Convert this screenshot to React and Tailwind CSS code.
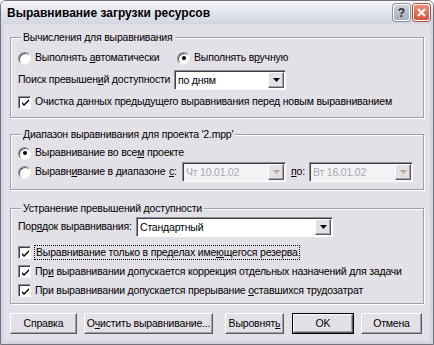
import React from 'react';

const font = "font-['Liberation_Sans','Noto_Sans',sans-serif]";
const txt = 'text-[10.5px] tracking-[-0.2px] whitespace-nowrap';

function Radio({ checked }) {
  return (
    <span className="relative inline-block w-[13px] h-[13px] shrink-0 rounded-full bg-white border border-t-[#8d8b94] border-l-[#8d8b94] border-b-[#f4f3f6] border-r-[#f4f3f6] shadow-[inset_1px_1px_0_#55545a]">
      {checked && (
        <span className="absolute left-[3.5px] top-[3.5px] w-[4px] h-[4px] rounded-full bg-black" />
      )}
    </span>
  );
}

function Check() {
  return (
    <span className="inline-flex items-center justify-center w-[13px] h-[13px] shrink-0 bg-white border border-t-[#8d8b94] border-l-[#8d8b94] border-b-white border-r-white shadow-[inset_1px_1px_0_#3e3d44]">
      <svg width="9" height="9" viewBox="0 0 9 9" className="mt-[1px] ml-[1px]">
        <path d="M1 4 L3 6 L8 1 L8 3 L3 8 L1 6 Z" fill="#000" />
      </svg>
    </span>
  );
}

function Arrow({ disabled }) {
  return (
    <span className="flex items-center justify-center w-[16px] h-full bg-[#e3e0e7] border border-t-white border-l-white border-b-[#5b5a62] border-r-[#5b5a62] shadow-[inset_-1px_-1px_0_#a3a1aa]">
      <svg width="7" height="4" viewBox="0 0 7 4">
        <path d="M0 0 H7 L3.5 4 Z" fill={disabled ? '#b9a68d' : '#000'} />
      </svg>
    </span>
  );
}

function Combo({ value, width, disabled }) {
  return (
    <div
      className={`flex items-stretch h-[20px] shrink-0 ${width} border border-t-[#8d8b94] border-l-[#8d8b94] border-b-white border-r-white shadow-[inset_1px_1px_0_#3e3d44] ${disabled ? 'bg-[#f3f2f5]' : 'bg-white'}`}
    >
      <span className={`flex-1 pl-[3px] pt-[1px] flex items-center ${txt} ${disabled ? 'text-[#a9a8ae]' : 'text-black'}`}>
        {value}
      </span>
      <span className="p-[1px] pl-0">
        <Arrow disabled={disabled} />
      </span>
    </div>
  );
}

function Group({ title, children, className }) {
  return (
    <fieldset className={`border border-[#a29fa9] shadow-[inset_1px_1px_0_#fff,1px_1px_0_#fff] pl-[7px] pr-[7px] ${className}`}>
      <legend className={`ml-[3px] px-[2px] leading-[13px] bg-[#e3e0e7] ${txt}`}>{title}</legend>
      {children}
    </fieldset>
  );
}

function Btn({ children, width, def }) {
  return (
    <button className={`${width} h-[21px] shrink-0 bg-[#e3e0e7] ${txt} ${def ? 'border border-black' : ''}`}>
      <span className="flex items-center justify-center w-full h-full border border-t-white border-l-white border-b-[#5b5a62] border-r-[#5b5a62] shadow-[inset_-1px_-1px_0_#a3a1aa]">
        <span>{children}</span>
      </span>
    </button>
  );
}

export default function App() {
  return (
    <div className={`w-[434px] h-[345px] flex flex-col bg-[#e3e0e7] border border-[#72737f] rounded-t-[6px] overflow-hidden text-black ${font}`}>
      {/* заголовок */}
      <div className="h-[23px] shrink-0 flex items-center pl-[6px] pr-[3px] bg-gradient-to-b from-[#f6f7fa] via-[#e2e4ec] to-[#d3d6e1]">
        <span className="flex-1 text-[12px] font-bold whitespace-nowrap">Выравнивание загрузки ресурсов</span>
        <span className="w-[17px] h-[17px] mr-[1px] flex items-center justify-center rounded-[3px] border border-white bg-gradient-to-b from-[#cdd1dc] to-[#a9aebd] shadow-[0_0_0_1px_#8d92a2] text-[12px] font-bold text-[#2c2f3a]">
          ?
        </span>
        <span className="w-[17px] h-[17px] ml-[2px] flex items-center justify-center rounded-[3px] border border-white bg-gradient-to-b from-[#ef8f7a] to-[#d2533c] shadow-[0_0_0_1px_#a8503f]">
          <svg width="9" height="9" viewBox="0 0 9 9">
            <path d="M1 1 L8 8 M8 1 L1 8" stroke="#fff" strokeWidth="2" />
          </svg>
        </span>
      </div>

      {/* тело */}
      <div className="flex-1 flex flex-col px-[6px] pt-[7px] border-x-[3px] border-b-[3px] border-[#d3d6e1]">
        <Group title="Вычисления для выравнивания" className="pt-[4px] pb-[5px]">
          <div className="h-[20px] flex items-center">
            <label className="w-[159px] flex items-center gap-[4px]">
              <Radio /> <span className={txt}>Выполнять <u>а</u>втоматически</span>
            </label>
            <label className="flex items-center gap-[4px]">
              <Radio checked /> <span className={txt}>Выполнять в<u>р</u>учную</span>
            </label>
          </div>
          <div className="mt-[2px] h-[20px] flex items-center">
            <span className={`w-[156px] ${txt}`}>Поиск превышен<u>и</u>й доступности</span>
            <Combo value="по дням" width="w-[112px]" />
          </div>
          <div className="mt-[2px] h-[20px] flex items-center gap-[4px]">
            <Check />
            <span className={txt}>Очистка данных предыдущего выравнивания перед новым выравниванием</span>
          </div>
        </Group>

        <Group title="Диапазон выравнивания для проекта '2.mpp'" className="mt-[10px] pt-[3px] pb-[7px]">
          <div className="h-[18px] flex items-center gap-[4px]">
            <Radio checked />
            <span className={txt}>Выравнивание во все<u>м</u> проекте</span>
          </div>
          <div className="h-[20px] flex items-center">
            <label className="w-[151px] flex items-center gap-[4px]">
              <Radio /> <span className={txt}>Выравн<u>и</u>вание в диапазоне</span>
            </label>
            <span className={`w-[13px] ${txt}`}><u>с</u>:</span>
            <Combo value="Чт 10.01.02" width="w-[104px]" disabled />
            <span className={`w-[23px] pl-[5px] ${txt}`}><u>п</u>о:</span>
            <Combo value="Вт 16.01.02" width="w-[104px]" disabled />
          </div>
        </Group>

        <Group title="Устранение превышений доступности" className="mt-[12px] pt-[2px] pb-[3px]">
          <div className="h-[20px] flex items-center">
            <span className={`w-[118px] ${txt}`}>Пор<u>я</u>док выравнивания:</span>
            <Combo value="Стандартный" width="w-[197px]" />
          </div>
          <div className="mt-[6px] h-[19px] flex items-center gap-[4px]">
            <Check />
            <span className={`outline outline-1 outline-dotted outline-black px-[1px] leading-[13px] ${txt}`}>
              Выравнивание только в пределах име<u>ю</u>щегося резерва
            </span>
          </div>
          <div className="h-[19px] flex items-center gap-[4px]">
            <Check />
            <span className={txt}>Пр<u>и</u> выравнивании допускается коррекция отдельных назначений для задачи</span>
          </div>
          <div className="h-[19px] flex items-center gap-[4px]">
            <Check />
            <span className={txt}>При выравнивании допускается прерывание <u>о</u>ставшихся трудозатрат</span>
          </div>
        </Group>

        <div className="mt-[9px] flex items-center">
          <Btn width="w-[67px]">Справка</Btn>
          <span className="w-[7px]" />
          <Btn width="w-[129px]">О<u>ч</u>истить выравнивание...</Btn>
          <span className="w-[12px]" />
          <Btn width="w-[59px]">Выровнят<u>ь</u></Btn>
          <span className="w-[8px]" />
          <Btn width="w-[62px]" def>OK</Btn>
          <span className="w-[7px]" />
          <Btn width="w-[61px]">Отмена</Btn>
        </div>
      </div>
    </div>
  );
}
